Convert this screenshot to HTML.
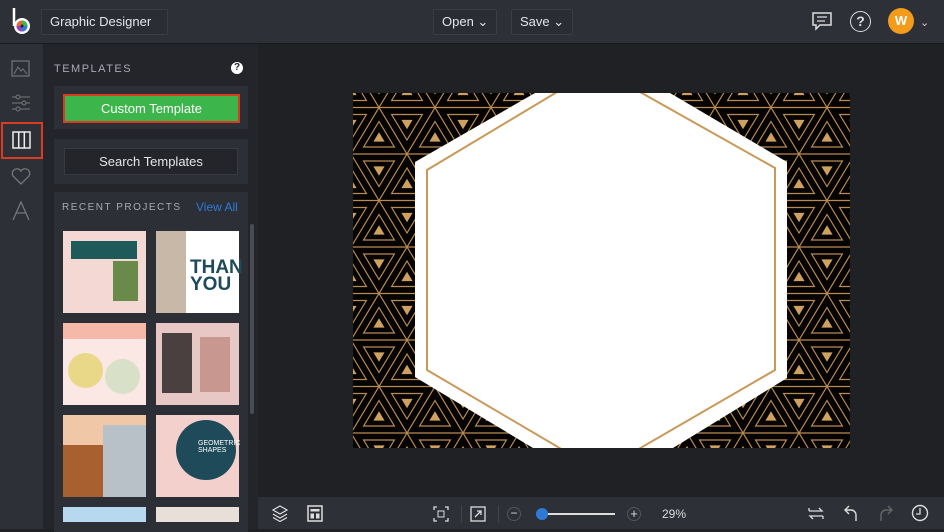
<!DOCTYPE html>
<html><head><meta charset="utf-8"><style>
*{box-sizing:border-box;margin:0;padding:0}
body{width:944px;height:529px;overflow:hidden;background:#202125;font-family:"Liberation Sans",sans-serif;position:relative}
.top{position:absolute;left:0;top:0;width:944px;height:44px;background:#2e3038;border-bottom:1px solid #1a1b1e}
.btn{position:absolute;color:#e4e4e8;font-size:13px;border:1px solid #3b3d46;background:#2b2d34;height:26px;line-height:24px;padding:0 8px;border-radius:2px}
.rail{position:absolute;left:0;top:44px;width:43px;height:485px;background:#2e3038}
.panel{position:absolute;left:43px;top:44px;width:215px;height:485px;background:#24252b}
.box{position:absolute;background:#2d2f36}
.bottom{position:absolute;left:258px;top:497px;width:686px;height:32px;background:#2e3038}
.th{position:absolute;width:83px;height:82px}
</style></head><body>
<div class="top">
 <svg style="position:absolute;left:10px;top:6px" width="24" height="30" viewBox="0 0 24 30"><path d="M4 2V20" stroke="#fff" stroke-width="2.5"/><circle cx="12" cy="20" r="8" fill="#fff"/><circle cx="12" cy="20" r="5.5" fill="#e06b30"/><path d="M12 14.5A5.5 5.5 0 0 1 17.5 20H12Z" fill="#3cb54a"/><path d="M17.5 20A5.5 5.5 0 0 1 12 25.5V20Z" fill="#2e7bd6"/><path d="M12 25.5A5.5 5.5 0 0 1 6.5 20H12Z" fill="#9a3fc1"/><circle cx="12" cy="20" r="1.5" fill="#222"/></svg>
 <div class="btn" style="left:41px;top:9px;width:127px">Graphic Designer ⌄</div>
 <div class="btn" style="left:433px;top:9px">Open ⌄</div>
 <div class="btn" style="left:511px;top:9px">Save ⌄</div>
 <svg style="position:absolute;left:811px;top:11px" width="22" height="20"><path d="M2 2H20V14H9L5 18V14H2Z" fill="none" stroke="#ddd" stroke-width="1.5"/><path d="M6 6H16M6 10H14" stroke="#ddd" stroke-width="1.3"/></svg>
 <div style="position:absolute;left:850px;top:11px;width:21px;height:21px;border:1.6px solid #ddd;border-radius:50%;color:#ddd;font-size:14px;text-align:center;line-height:18px;font-weight:bold">?</div>
 <div style="position:absolute;left:888px;top:8px;width:26px;height:26px;border-radius:50%;background:#f39b1b;color:#fff;font-size:13px;font-weight:bold;text-align:center;line-height:26px">W</div>
 <div style="position:absolute;left:920px;top:16px;color:#ccc;font-size:11px">⌄</div>
</div>
<div class="rail">
 <svg style="position:absolute;left:11px;top:16px" width="20" height="18"><rect x="1" y="1" width="17" height="15" fill="none" stroke="#777" stroke-width="1.2"/><path d="M3 14L7 7L10 11L12 9L16 14" fill="none" stroke="#777"/></svg>
 <svg style="position:absolute;left:11px;top:50px" width="20" height="18"><path d="M1 3H19M1 9H19M1 15H19" stroke="#777"/><circle cx="7" cy="3" r="2" fill="#2e3038" stroke="#777"/><circle cx="13" cy="9" r="2" fill="#2e3038" stroke="#777"/><circle cx="7" cy="15" r="2" fill="#2e3038" stroke="#777"/></svg>
 <div style="position:absolute;left:1px;top:78px;width:42px;height:37px;border:2px solid #d93b23"></div>
 <svg style="position:absolute;left:12px;top:87px" width="19" height="18"><rect x="1" y="1" width="17" height="16" fill="none" stroke="#eee" stroke-width="1.5"/><path d="M6.7 1V17M12.3 1V17" stroke="#eee" stroke-width="1.5"/></svg>
 <svg style="position:absolute;left:11px;top:123px" width="20" height="18"><path d="M10 17L2 9A4.5 4.5 0 0 1 10 4A4.5 4.5 0 0 1 18 9Z" fill="none" stroke="#777" stroke-width="1.3"/></svg>
 <svg style="position:absolute;left:11px;top:157px" width="20" height="20"><path d="M2 19L10 1L18 19M5 12H15" fill="none" stroke="#777" stroke-width="1.3"/></svg>
</div>
<div class="panel">
 <div style="position:absolute;left:11px;top:19px;color:#a8a9b0;font-size:11px;letter-spacing:1.5px">TEMPLATES</div>
 <div style="position:absolute;left:188px;top:18px;width:12px;height:12px;border-radius:50%;background:#fff;color:#24252b;font-size:10px;font-weight:bold;text-align:center;line-height:12px">?</div>
 <div class="box" style="left:11px;top:42px;width:194px;height:43px"></div>
 <div style="position:absolute;left:20px;top:50px;width:177px;height:29px;background:#3cb54a;border:2px solid #d93b23;color:#fff;font-size:13px;text-align:center;line-height:25px">Custom Template</div>
 <div class="box" style="left:11px;top:95px;width:194px;height:45px"></div>
 <div style="position:absolute;left:21px;top:104px;width:174px;height:27px;background:#24252b;border:1px solid #383a42;color:#e4e4e8;font-size:13px;text-align:center;line-height:25px">Search Templates</div>
 <div class="box" style="left:11px;top:148px;width:194px;height:340px"></div>
 <div style="position:absolute;left:19px;top:158px;color:#a8a9b0;font-size:10px;letter-spacing:1.5px">RECENT PROJECTS</div>
 <div style="position:absolute;left:153px;top:156px;color:#2e7bd6;font-size:12px">View All</div>
 <div style="position:absolute;left:207px;top:180px;width:4px;height:190px;background:#4a4c54;border-radius:2px"></div>
</div>
<div class="th" style="left:63px;top:231px;background:#f4d8d4"><div style="position:absolute;left:8px;top:10px;width:66px;height:18px;background:#1e5a5a"></div><div style="position:absolute;left:50px;top:30px;width:25px;height:40px;background:#6a8a4a"></div></div>
<div class="th" style="left:156px;top:231px;background:#fff"><div style="position:absolute;left:0;top:0;width:30px;height:82px;background:#c8b8a8"></div><div style="position:absolute;left:34px;top:28px;color:#1e4a5a;font-weight:bold;font-size:19px;line-height:17px">THAN<br>YOU</div></div>
<div class="th" style="left:63px;top:323px;background:#fbe8e4"><div style="position:absolute;left:0;top:0;width:83px;height:16px;background:#f6b8a8"></div><div style="position:absolute;left:5px;top:30px;width:35px;height:35px;border-radius:50%;background:#e8d888"></div><div style="position:absolute;left:42px;top:36px;width:35px;height:35px;border-radius:50%;background:#d8e0c8"></div></div>
<div class="th" style="left:156px;top:323px;background:#e8c8c4"><div style="position:absolute;left:6px;top:10px;width:30px;height:60px;background:#4a4040"></div><div style="position:absolute;left:44px;top:14px;width:30px;height:55px;background:#c89890"></div></div>
<div class="th" style="left:63px;top:415px;background:#f0c8a8"><div style="position:absolute;left:0;top:30px;width:50px;height:52px;background:#a86030"></div><div style="position:absolute;left:40px;top:10px;width:43px;height:72px;background:#b8c0c8"></div></div>
<div class="th" style="left:156px;top:415px;background:#f4d0cc"><div style="position:absolute;left:20px;top:5px;width:60px;height:60px;border-radius:50%;background:#1e4a5a"></div><div style="position:absolute;left:42px;top:25px;color:#fff;font-size:7px">GEOMETRIC<br>SHAPES</div></div>
<div class="th" style="left:63px;top:507px;height:15px;background:#b8d8f0"></div>
<div class="th" style="left:156px;top:507px;height:15px;background:#e8e0d8"></div>
<svg style="position:absolute;left:353px;top:93px" width="497" height="355">
 <defs><pattern id="p" width="56" height="93" patternUnits="userSpaceOnUse" x="-2" y="-32">
  <g stroke="#b98b52" stroke-width="1.2" fill="none">
   <path d="M-5 0H61M-5 46.5H61M-5 93H61"/>
   <path d="M0 0L56 93M56 0L0 93M-28 46.5L0 0M56 0L84 46.5M-28 46.5L0 93M56 93L84 46.5"/>
   <path d="M12.6 7H43.4L28 32.5Z M56 14L40.6 39.5H71.4Z M0 14L-15.4 39.5H15.4Z M40.6 53.5H71.4L56 79Z M-15.4 53.5H15.4L0 79Z M28 60.5L12.6 86H43.4Z"/>
  </g>
  <g fill="#d0a060"><path d="M22.4 12.4H33.6L28 21.7Z M56 24.8L50.4 34.1H61.6Z M0 24.8L-5.6 34.1H5.6Z M50.4 58.9H61.6L56 68.2Z M-5.6 58.9H5.6L0 68.2Z M28 71.3L22.4 80.6H33.6Z"/></g>
 </pattern></defs>
 <rect width="497" height="355" fill="#050403"/>
 <rect width="497" height="355" fill="url(#p)"/>
 <path d="M182 0H317L434 69V285L320 355H180L62 284V69Z" fill="#fff"/>
 <path d="M219 -10L74 77V277L210 357M271 -10L422 75V277L284 357" fill="none" stroke="#c9995a" stroke-width="2"/>
</svg>
<div class="bottom">
 <svg style="position:absolute;left:14px;top:8px" width="16" height="17"><path d="M8 1L15 5L8 9L1 5Z M1 9L8 13L15 9 M1 12.5L8 16.5L15 12.5" fill="none" stroke="#ddd" stroke-width="1.2"/></svg>
 <svg style="position:absolute;left:49px;top:8px" width="16" height="17"><rect x="1" y="1" width="14" height="15" fill="none" stroke="#ddd" stroke-width="1.5"/><rect x="3.5" y="4" width="9" height="2.5" fill="#ddd"/><rect x="3.5" y="8.5" width="3.5" height="5" fill="#ddd"/><rect x="9" y="8.5" width="3.5" height="5" fill="#ddd"/></svg>
 <svg style="position:absolute;left:175px;top:9px" width="16" height="16"><path d="M1 4V1H4M12 1H15V4M15 12V15H12M4 15H1V12" fill="none" stroke="#ddd" stroke-width="1.3"/><rect x="5" y="5" width="6" height="6" fill="none" stroke="#ddd"/></svg>
 <div style="position:absolute;left:203px;top:8px;width:1px;height:18px;background:#444"></div>
 <svg style="position:absolute;left:212px;top:9px" width="16" height="16"><rect x="1" y="1" width="14" height="14" fill="none" stroke="#ddd" stroke-width="1.3"/><path d="M5 11L11 5M7 5H11V9" fill="none" stroke="#ddd" stroke-width="1.3"/></svg>
 <div style="position:absolute;left:240px;top:8px;width:1px;height:18px;background:#444"></div>
 <div style="position:absolute;left:249px;top:10px;width:14px;height:14px;border-radius:50%;border:1px solid #555;color:#ddd;font-size:12px;line-height:11px;text-align:center">−</div>
 <div style="position:absolute;left:282px;top:16px;width:75px;height:2px;background:#ddd"></div>
 <div style="position:absolute;left:278px;top:11px;width:12px;height:12px;border-radius:50%;background:#2e7bd6"></div>
 <div style="position:absolute;left:369px;top:10px;width:14px;height:14px;border-radius:50%;border:1px solid #555;color:#ddd;font-size:13px;line-height:12px;text-align:center">+</div>
 <div style="position:absolute;left:404px;top:10px;color:#ddd;font-size:12px">29%</div>
 <svg style="position:absolute;left:550px;top:8px" width="16" height="17"><path d="M1 6H14L11 3M15 11H2L5 14M1 6V3M15 11V14" fill="none" stroke="#ddd" stroke-width="1.3"/></svg>
 <svg style="position:absolute;left:585px;top:7px" width="16" height="18"><path d="M6 2L2 6L6 10M2 6H8A5 5 0 0 1 13 11V17" fill="none" stroke="#ddd" stroke-width="1.4"/></svg>
 <svg style="position:absolute;left:620px;top:7px" width="16" height="18"><path d="M10 2L14 6L10 10M14 6H8A5 5 0 0 0 3 11V17" fill="none" stroke="#666" stroke-width="1.4"/></svg>
 <svg style="position:absolute;left:653px;top:7px" width="18" height="18"><circle cx="9" cy="9" r="7.5" fill="none" stroke="#ddd" stroke-width="1.4"/><path d="M9 4V10H5" fill="none" stroke="#ddd" stroke-width="1.3"/></svg>
</div>
</body></html>
